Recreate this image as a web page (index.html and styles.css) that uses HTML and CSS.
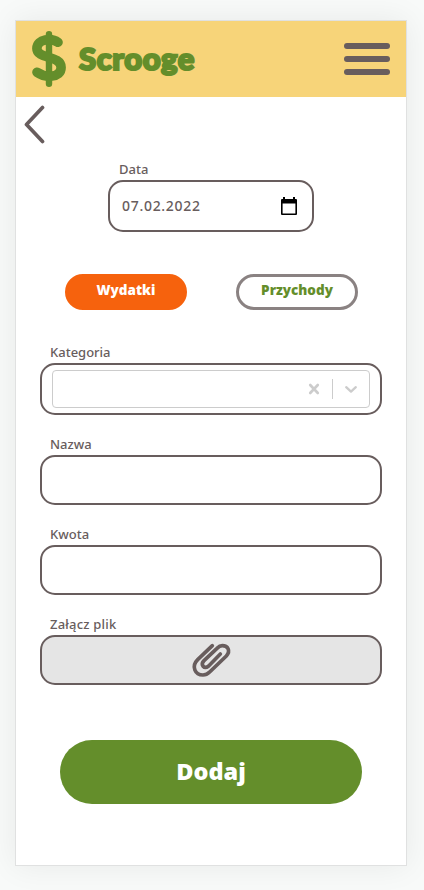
FILE: index.html
```html
<!DOCTYPE html>
<html lang="pl">
<head>
<meta charset="utf-8">
<title>Scrooge</title>
<link rel="stylesheet" href="styles.css">
</head>
<body>
<div class="card">
  <header class="header">
    <svg class="dollar" width="34" height="56" viewBox="0 0 34 56" fill="none" stroke="currentColor" stroke-linecap="round">
      <path stroke-width="6.400" d="M17 3.200V52.800"/>
      <path stroke-width="9.600" d="M26 11.300C20 7 4.900 7.500 4.900 17.500C4.900 28.500 29.100 24 29.100 36.500C29.100 47.500 13 46.800 5 41.200"/>
    </svg>
    <span class="brand">Scrooge</span>
    <div class="menu"><i></i><i></i><i></i></div>
  </header>
  <main class="main">
    <svg class="back" width="22" height="40" viewBox="0 0 22 40" fill="none" stroke="currentColor" stroke-width="3.700" stroke-linecap="round" stroke-linejoin="round"><path d="M19.500 2.500L3.500 19.500L19.500 36.500"/></svg>
    <div class="field date-field">
      <label class="label">Data</label>
      <div class="box date-box">
        <span class="date">07.02.2022</span>
        <svg width="18" height="20" viewBox="0 0 18 20"><path fill="#000" d="M3 1h2v2h8V1h2v2h1a1 1 0 0 1 1 1v14a1 1 0 0 1-1 1H2a1 1 0 0 1-1-1V4a1 1 0 0 1 1-1h1zM2.600 7.500v9.900h12.800V7.500z"/></svg>
      </div>
    </div>
    <div class="toggle">
      <div class="pill active">Wydatki</div>
      <div class="pill">Przychody</div>
    </div>
    <div class="field">
      <label class="label">Kategoria</label>
      <div class="box category">
        <div class="select">
          <svg width="12" height="12" viewBox="0 0 12 12" fill="none" stroke="currentColor" stroke-width="2.600" stroke-linecap="round"><path d="M2.200 2L9.800 10M9.800 2L2.200 10"/></svg>
          <span class="divider"></span>
          <svg width="14" height="10" viewBox="0 0 14 10" fill="none" stroke="currentColor" stroke-width="2.300" stroke-linecap="round" stroke-linejoin="round"><path d="M2.200 3.200L7 7.600L11.800 3.200"/></svg>
        </div>
      </div>
    </div>
    <div class="field">
      <label class="label">Nazwa</label>
      <div class="box"></div>
    </div>
    <div class="field">
      <label class="label">Kwota</label>
      <div class="box"></div>
    </div>
    <div class="field">
      <label class="label file-label">Załącz plik</label>
      <div class="box file">
        <svg width="42" height="36" viewBox="479 96 126 108" fill="none" stroke="currentColor" stroke-width="11" stroke-linecap="round" stroke-linejoin="round"><path d="M546 107L502 149C482 169 494 195 518 195C527 195 533 191 538 186L588 138C602 122 592 107 576 107C569 107 565 110 560 115L521 152C509 164 521 179 535 168L570 132"/></svg>
      </div>
    </div>
    <button class="submit">Dodaj</button>
  </main>
</div>
</body>
</html>
```
FILE: styles.css
```css
* { box-sizing: border-box; }
body {
  margin: 0;
  height: 890px;
  padding: 20px 17px 0 15px;
  overflow: hidden;
  background: #f8faf9;
  color: #685d5d;
  font-family: "Noto Sans", "Open Sans", sans-serif;
}
.card {
  height: 846px;
  border: 1px solid #e0e1e1;
  background: #fff;
  box-shadow: 0 0 30px rgba(0, 0, 0, .07);
}
.header {
  display: flex;
  align-items: center;
  height: 76px;
  padding: 0 16px;
  background: #f7d479;
  color: #648e2b;
}
.brand {
  margin-left: 13px;
  padding-bottom: 3px;
  font: 900 31px/40px Lato, sans-serif;
  letter-spacing: .6px;
  -webkit-text-stroke: 2.2px #648e2b;
  stroke-linejoin: round;
}
.menu { display: grid; gap: 7px; width: 46px; margin-left: auto; }
.menu i { height: 6px; border-radius: 3px; background: #685d5d; }
.main { display: flex; flex-direction: column; padding: 8px 24px 0; }
.back { display: block; margin-left: -17px; }
.field { margin-top: 18px; }
.date-field { width: 206px; margin: 13px 0 0 68px; }
.label {
  display: flex;
  height: 22px;
  padding-left: 10px;
  font-size: 13px;
  font-weight: 500;
  line-height: 22px;
  white-space: nowrap;
}
.date-field .label { padding-left: 11px; }
.file-label { letter-spacing: .2px; }
.box {
  display: flex;
  align-items: center;
  height: 50px;
  border: 2px solid #685d5d;
  border-radius: 15px;
}
.date-box { justify-content: space-between; height: 52px; padding: 0 14px 0 12px; }
.date { font-size: 14px; font-weight: 500; line-height: 20px; letter-spacing: .7px; }
.toggle { display: flex; gap: 49px; margin: 42px 0 13px 25px; }
.pill {
  display: flex;
  justify-content: center;
  width: 122px;
  height: 36px;
  border: 3px solid #8a8282;
  border-radius: 18px;
  color: #648e2b;
  font-size: 13.500px;
  font-weight: 900;
  line-height: 27px;
}
.active { border-color: #f6620d; background: #f6620d; color: #fff; }
.category { height: 52px; padding: 0 10px; }
.select {
  display: flex;
  align-items: center;
  justify-content: flex-end;
  width: 100%;
  height: 38px;
  padding-right: 11px;
  border: 1px solid #ccc;
  border-radius: 4px;
  color: #ccc;
}
.divider { width: 1px; height: 20px; margin: 0 11px 0 12px; background: #ccc; }
.file { justify-content: center; background: #e5e5e5; }
.submit {
  width: 302px;
  height: 64px;
  margin: 55px 0 0 20px;
  padding: 0 0 3px;
  border: 0;
  border-radius: 32px;
  background: #648e2b;
  color: #fff;
  font: 900 23.500px/32px "Noto Sans", sans-serif;
}
```
